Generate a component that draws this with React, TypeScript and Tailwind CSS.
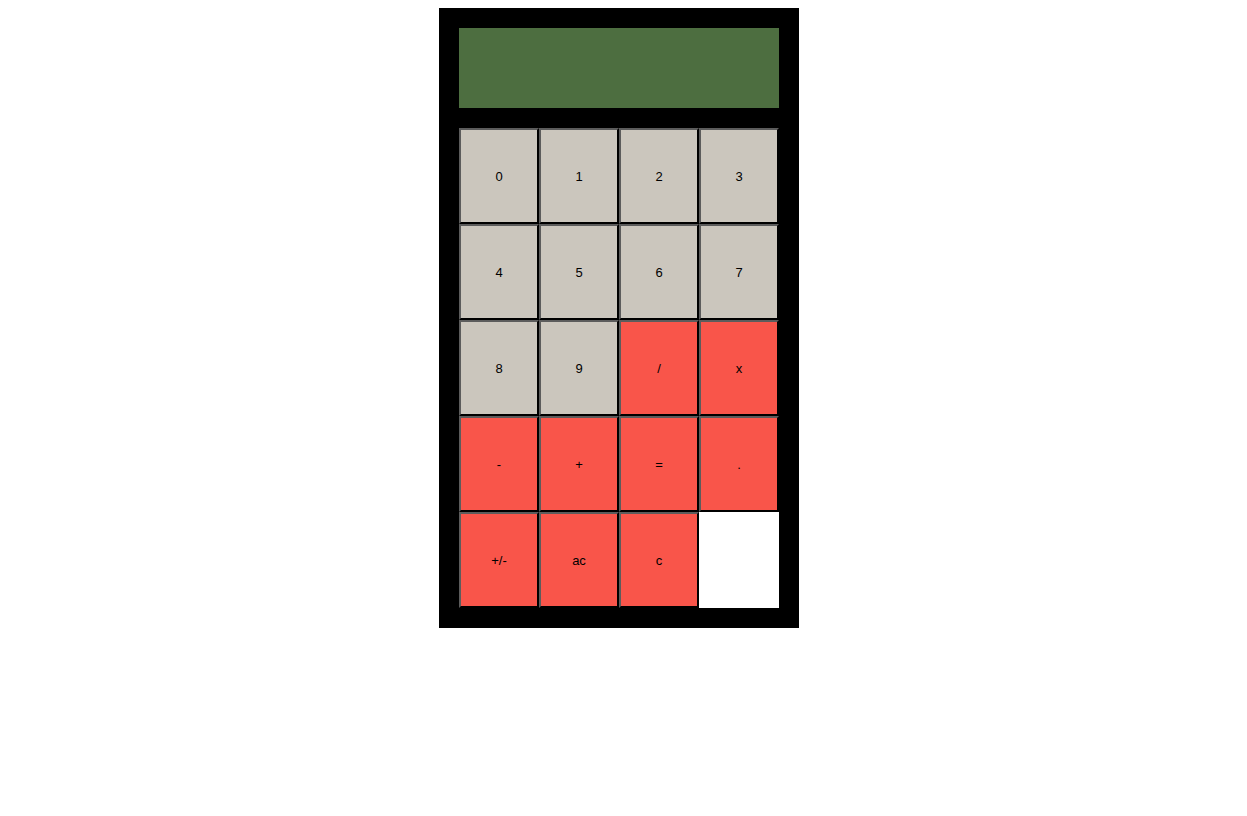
import React from "react";

const keys: { label: string; red?: boolean }[] = [
  { label: "0" }, { label: "1" }, { label: "2" }, { label: "3" },
  { label: "4" }, { label: "5" }, { label: "6" }, { label: "7" },
  { label: "8" }, { label: "9" }, { label: "/", red: true }, { label: "x", red: true },
  { label: "-", red: true }, { label: "+", red: true }, { label: "=", red: true }, { label: ".", red: true },
  { label: "+/-", red: true }, { label: "ac", red: true }, { label: "c", red: true },
];

export default function App() {
  return (
    <div className="w-full min-h-[816px] bg-white pt-2 flex justify-center" style={{ fontFamily: '"Liberation Sans", Arial, sans-serif' }}>
      <div className="w-[360px] h-[620px] bg-black p-5 flex flex-col gap-5 ml-[-9px]">
        <div className="h-20 w-full bg-[#4d6e40]" />
        <div className="grid grid-cols-4 grid-rows-[repeat(5,96px)]">
          {keys.map((k) => (
            <button
              key={k.label}
              className={`h-24 w-20 flex items-center justify-center pt-[2px] border-2 border-t-[#5c5c5c] border-l-[#5c5c5c] border-b-black border-r-black text-[13px] text-black ${k.red ? "bg-[#f9554a]" : "bg-[#cbc6bd]"}`}
            >
              {k.label}
            </button>
          ))}
          <div className="h-24 w-20 bg-white" />
        </div>
      </div>
    </div>
  );
}
